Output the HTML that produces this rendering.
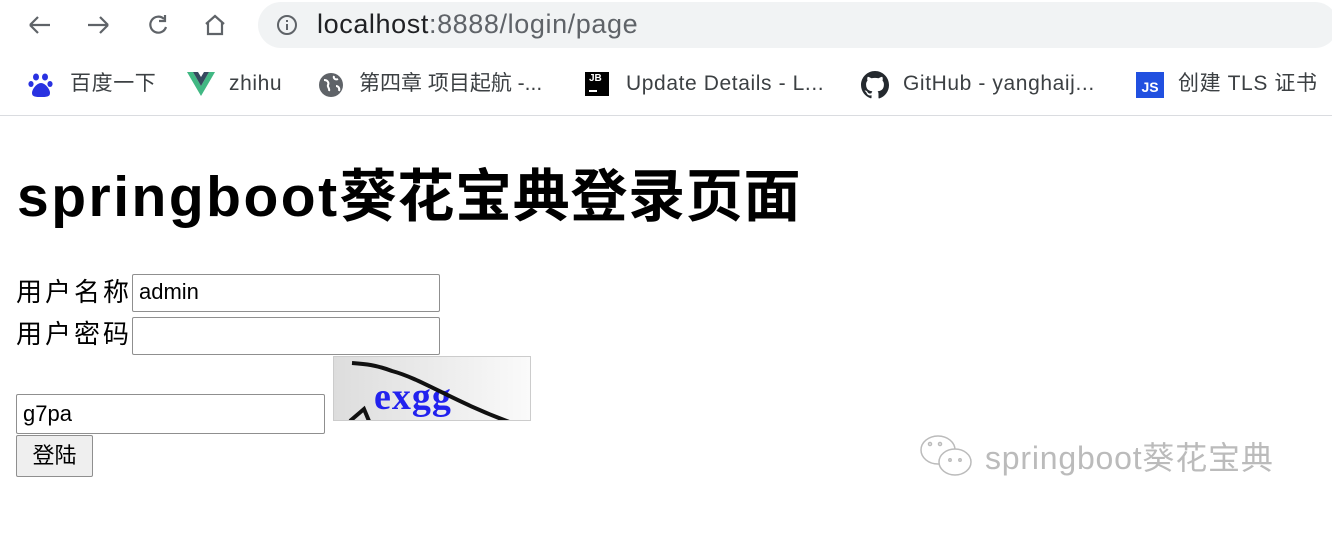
<!DOCTYPE html>
<html><head><meta charset="utf-8"><style>
*{margin:0;padding:0;box-sizing:border-box}
body{width:1332px;height:552px;background:#fff;position:relative;overflow:hidden;font-family:"Liberation Sans","Noto Sans CJK SC",sans-serif}
.a{position:absolute;white-space:nowrap}
.url{left:258px;top:2px;width:1080px;height:46px;background:#f1f3f4;border-radius:23px}
.bm{top:70px;font-size:21px;color:#3c4043;line-height:28px;letter-spacing:0.6px}
.inp{position:absolute;border:1px solid #8f8f8f;border-radius:2px;background:#fff;font-size:22px;padding-left:6px;line-height:34px;color:#000}
.lbl{font-size:26px;color:#000;letter-spacing:3px;line-height:32px}
</style></head><body>
<svg class="a" style="left:26px;top:12px" width="220" height="26" viewBox="0 0 220 26" fill="none" stroke="#5f6368" stroke-width="2.2">
<path d="M4 13h20M4 13l8-8M4 13l8 8"/>
<path d="M62 13h20M82 13l-8-8M82 13l-8 8"/>
<path d="M138 7a8 8 0 1 0 2 8"/><path d="M139 3v6h-6" />
<path d="M180 12l9-8 9 8M182 10v12h14V10"/>
</svg>
<div class="a url"></div>
<svg class="a" style="left:276px;top:14px" width="22" height="22" viewBox="0 0 22 22"><circle cx="11" cy="11" r="9" fill="none" stroke="#5f6368" stroke-width="2"/><path d="M11 10v6M11 6v2" stroke="#5f6368" stroke-width="2"/></svg>
<div class="a" style="left:317px;top:8px;font-size:27px;color:#202124;line-height:32px;letter-spacing:0.6px">localhost<span style="color:#5f6368">:8888/login/page</span></div>

<svg class="a" style="left:28px;top:72px" width="26" height="26" viewBox="0 0 26 26"><g fill="#2932e1"><ellipse cx="8" cy="5" rx="3" ry="3.5"/><ellipse cx="17" cy="5" rx="3" ry="3.5"/><ellipse cx="3" cy="12" rx="2.6" ry="3"/><ellipse cx="22" cy="12" rx="2.6" ry="3"/><path d="M13 11c-4 0-9 6-9 10s4 4 9 4 9 0 9-4-5-10-9-10z"/></g></svg>
<div class="a bm" style="left:70px">百度一下</div>
<svg class="a" style="left:187px;top:72px" width="28" height="24" viewBox="0 0 28 24"><path d="M0 0h6l8 14 8-14h6L14 24z" fill="#41b883"/><path d="M6 0h5l3 5 3-5h5L14 14z" fill="#35495e"/></svg>
<div class="a bm" style="left:229px">zhihu</div>
<svg class="a" style="left:318px;top:72px" width="26" height="26" viewBox="0 0 26 26"><circle cx="13" cy="13" r="12" fill="#5f6368"/><path d="M6 8c4 0 5 3 4 5s2 3 1 6M16 4c-1 3 2 4 4 3M18 14c2 0 4 2 3 5" stroke="#fff" stroke-width="2" fill="none"/></svg>
<div class="a bm" style="left:359px;letter-spacing:0">第四章 项目起航 -...</div>
<div class="a" style="left:585px;top:72px;width:24px;height:24px;background:#000;color:#fff;font:bold 10px 'Liberation Sans';padding:2px 0 0 4px;line-height:10px">JB<div style="width:8px;height:2px;background:#fff;margin-top:6px"></div></div>
<div class="a bm" style="left:626px">Update Details - L...</div>
<svg class="a" style="left:861px;top:71px" width="28" height="28" viewBox="0 0 16 16"><path fill="#24292e" d="M8 0C3.58 0 0 3.58 0 8c0 3.54 2.29 6.53 5.47 7.59.4.07.55-.17.55-.38v-1.33c-2.23.48-2.7-1.07-2.7-1.07-.36-.92-.89-1.17-.89-1.17-.73-.5.05-.49.05-.49.8.06 1.23.83 1.23.83.71 1.22 1.87.87 2.33.66.07-.52.28-.87.5-1.07-1.78-.2-3.64-.89-3.64-3.95 0-.87.31-1.59.82-2.15-.08-.2-.36-1.02.08-2.12 0 0 .67-.21 2.2.82.64-.18 1.32-.27 2-.27.68 0 1.36.09 2 .27 1.53-1.04 2.2-.82 2.2-.82.44 1.1.16 1.92.08 2.12.51.56.82 1.27.82 2.15 0 3.07-1.87 3.75-3.65 3.95.29.25.54.73.54 1.48v2.2c0 .21.15.46.55.38A8.01 8.01 0 0016 8c0-4.42-3.58-8-8-8z"/></svg>
<div class="a bm" style="left:903px">GitHub - yanghaij...</div>
<div class="a" style="left:1136px;top:72px;width:28px;height:26px;background:#2150e0;color:#fff;font:bold 14px 'Liberation Sans';text-align:center;line-height:30px">JS</div>
<div class="a bm" style="left:1178px">创建 TLS 证书</div>
<div class="a" style="left:0;top:115px;width:1332px;height:1px;background:#dadce0"></div>

<div class="a" style="left:17px;top:162px;font-size:57px;font-weight:bold;line-height:70px;letter-spacing:0.7px"><span style="letter-spacing:2.5px">springboot</span>葵花宝典登录页面</div>

<div class="a lbl" style="left:16px;top:276px">用户名称</div>
<div class="inp" style="left:132px;top:274px;width:308px;height:38px">admin</div>
<div class="a lbl" style="left:16px;top:318px">用户密码</div>
<div class="inp" style="left:132px;top:317px;width:308px;height:38px"></div>
<div class="inp" style="left:16px;top:394px;width:309px;height:40px;line-height:38px">g7pa</div>
<div class="a" style="left:333px;top:356px;width:198px;height:65px;border:1px solid #ccc;background:linear-gradient(90deg,#ddd,#eee 60%,#fafafa);overflow:hidden">
<svg width="198" height="65" viewBox="0 0 198 65"><text x="40" y="52" font-family="Liberation Serif" font-weight="bold" font-size="38" fill="#2222ee" letter-spacing="1">exgg</text><path d="M18 6c14 1 24 2 40 8 30 8 60 30 120 52" stroke="#111" stroke-width="4" fill="none"/><path d="M16 64l14-12 5 12" stroke="#111" stroke-width="4" fill="none"/></svg></div>
<div class="a" style="left:16px;top:435px;width:77px;height:42px;border:1px solid #8f8f8f;border-radius:2px;background:#efefef;font-size:22px;text-align:center;line-height:40px">登陆</div>

<svg class="a" style="left:918px;top:432px" width="60" height="50" viewBox="0 0 60 50" fill="none" stroke="#bbb" stroke-width="1.5"><ellipse cx="20" cy="18" rx="17" ry="14"/><ellipse cx="37" cy="30" rx="16" ry="13" fill="#fff"/><circle cx="12" cy="12" r="1.5"/><circle cx="22" cy="12" r="1.5"/><circle cx="32" cy="28" r="1.2"/><circle cx="42" cy="28" r="1.2"/></svg>
<div class="a" style="left:985px;top:438px;font-size:32px;color:#bbb;line-height:40px;letter-spacing:0.8px">springboot葵花宝典</div>
</body></html>
